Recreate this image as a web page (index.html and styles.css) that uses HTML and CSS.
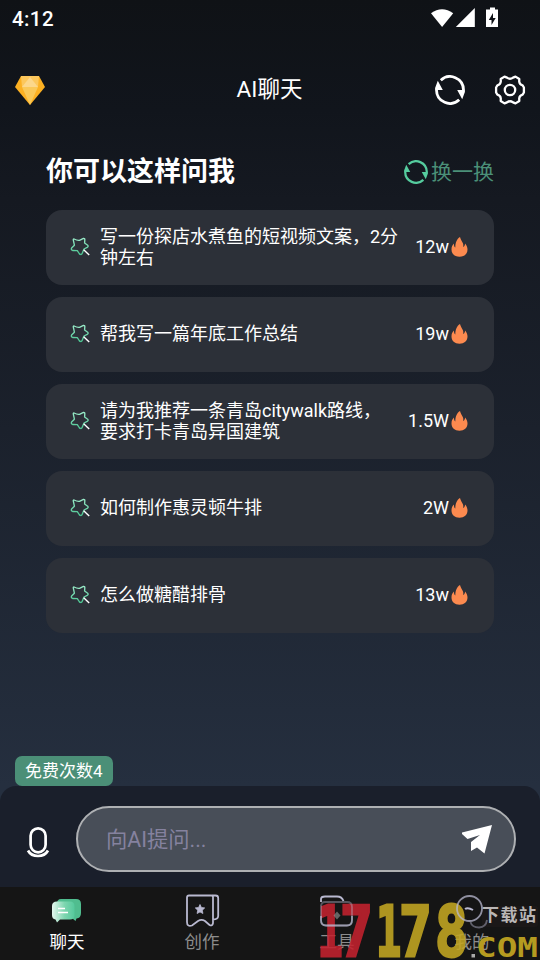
FILE: index.html
```html
<!DOCTYPE html>
<html lang="zh-CN">
<head>
<meta charset="utf-8">
<title>AI聊天</title>
<link rel="stylesheet" href="styles.css">
</head>
<body>
<svg class="defs" aria-hidden="true">
  <defs>
    <linearGradient id="mint" x1="0" y1="0" x2="0" y2="1"><stop offset="0" stop-color="#9aebc9"/><stop offset="1" stop-color="#4cc592"/></linearGradient>
    <linearGradient id="bubble" x1="0" y1="0.5" x2="1" y2="0.5"><stop offset="0" stop-color="#e5f6ee"/><stop offset=".55" stop-color="#7ed6b0"/><stop offset="1" stop-color="#55c99c"/></linearGradient>
    <symbol id="refresh" viewBox="0 0 30 30">
      <path d="M5.800 5.200A13.500 13.500 0 0 1 28.500 15M24.200 24.800A13.500 13.500 0 0 1 1.500 15" fill="none" stroke="currentColor" stroke-width="2.800"/>
      <path d="M2.800 5.800 7.800 15H0.100V13ZM27.200 24.200 22.200 15H29.900V17Z" fill="currentColor"/>
    </symbol>
    <symbol id="star" viewBox="0 0 20 20">
      <path d="M4 2Q7.500 3.800 9.500 3.300L13.500 1.400Q15 1.300 14.800 3L14.600 6L17.700 8.200Q18.800 9.500 17.200 10.400L14 12L12 16.700Q10.500 18.300 9.200 16.500L7.300 13.600L2.600 13.500Q.700 12.700 1.600 11L4.400 8.200L3.400 3.500Q3 2 4 2Z" fill="none" stroke="url(#mint)" stroke-width="1.350" stroke-linejoin="round"/>
      <path d="m13.700 12.700 5.500 5.300" stroke="#fff" stroke-width="1.400"/>
    </symbol>
    <symbol id="fire" viewBox="0 0 17 20">
      <path d="M9 0C9.600 2.500 11.200 4.500 12 6.500C12.500 8 12.300 9.300 12.200 10C13.500 9.300 14 7.800 14.100 6.400C15.800 8.400 16.500 10.300 16.500 12.500C16.500 17 13.200 19.700 8.500 19.700C3.700 19.700.5 16.800.5 12.500C.5 9.900 1.400 8.100 3 6.600C2.900 8.400 3.200 9.800 4.300 10.500C4.400 5.400 5.700 2.200 9 0Z" fill="#fc8a4f"/>
    </symbol>
  </defs>
</svg>
<div class="app">
  <div class="status">
    <span>4:12</span>
    <svg width="70" height="22" viewBox="0 0 70 22" fill="#fff">
      <path d="M1 5.200Q12 -2.800 23.200 5.200L12.100 19Z"/><path d="M44.800 0V19H25.800Z"/>
      <path fill-rule="evenodd" d="M60-.5h5v2h3v17.500H56V1.500h4ZM63 5l-4.200 7h2.700v5l4.200-7H63Z"/>
    </svg>
  </div>
  <header class="header">
    <svg width="30" height="29" viewBox="0 0 30 29">
      <path d="M6 0h18l6 11-15 18L0 11Z" fill="#fcb022"/><path d="M6 0h18l-1 11H7Z" fill="#fcc75c"/><path d="M15 1l8 10H7Z" fill="#fcd78b"/><path d="M7 11h16l-8 18Z" fill="#fac858"/>
    </svg>
    <h1>AI聊天</h1>
    <div class="actions">
      <svg width="30" height="30"><use href="#refresh"/></svg>
      <svg width="30" height="30" viewBox="0 0 30 30" fill="none" stroke="#fff" stroke-width="2.300" stroke-linejoin="round">
        <path d="M9.500 1.600 12 2.600Q15 5 18 2.600L20.500 1.600 24.300 4 24.200 6.500Q24.500 9.600 27.600 10.300L28.900 12.500V17.500L27.600 19.700Q24.500 20.400 24.200 23.500L24.300 26 20.500 28.400 18 27.400Q15 25 12 27.400L9.500 28.400 5.700 26 5.800 23.500Q5.500 20.400 2.400 19.700L1.100 17.500V12.500L2.400 10.300Q5.500 9.600 5.800 6.500L5.700 4Z"/>
        <circle cx="15" cy="15" r="5.200"/>
      </svg>
    </div>
  </header>
  <main class="main">
    <div class="title-row">
      <h2>你可以这样问我</h2>
      <div class="swap"><svg width="24" height="24"><use href="#refresh"/></svg><span>换一换</span></div>
    </div>
    <div class="card"><svg class="star"><use href="#star"/></svg><p>写一份探店水煮鱼的短视频文案，2分钟左右</p><span>12w</span><svg class="fire"><use href="#fire"/></svg></div>
    <div class="card"><svg class="star"><use href="#star"/></svg><p>帮我写一篇年底工作总结</p><span>19w</span><svg class="fire"><use href="#fire"/></svg></div>
    <div class="card"><svg class="star"><use href="#star"/></svg><p>请为我推荐一条青岛citywalk路线，<br>要求打卡青岛异国建筑</p><span>1.5W</span><svg class="fire"><use href="#fire"/></svg></div>
    <div class="card"><svg class="star"><use href="#star"/></svg><p>如何制作惠灵顿牛排</p><span>2W</span><svg class="fire"><use href="#fire"/></svg></div>
    <div class="card"><svg class="star"><use href="#star"/></svg><p>怎么做糖醋排骨</p><span>13w</span><svg class="fire"><use href="#fire"/></svg></div>
  </main>
  <div class="quota">免费次数4</div>
  <div class="composer">
    <svg width="22" height="32" viewBox="0 0 22 32" fill="none" stroke="#fff" stroke-width="2.700">
      <rect x="3.600" y="2.300" width="15" height="24" rx="7.500"/><path d="M1 24.500Q4 30 11 30T21 24.500"/>
    </svg>
    <div class="field">
      <span>向AI提问...</span>
      <svg width="30" height="29" viewBox="0 0 30 29"><path d="M30 0 22.500 28.500 15 22.500 9 26V17L18 10 5.500 14 0 9V7.500Z" fill="#fff"/></svg>
    </div>
  </div>
  <nav class="nav">
    <div class="tab active">
      <svg width="36" height="36" viewBox="0 0 36 36">
        <path d="M12 6h15q5 0 5 5v9q0 5-4.500 5.500l-1 2.500-3-2.500H12q-4 0-4-5v-10q0-4.500 4-4.500Z" fill="#50bd8f"/>
        <path d="M8 8.500h13q4.500 0 4.500 4.500v9q0 4.500-4.500 4.500H11l-3 3-1.500-3Q3 26 3 22v-9q0-4.500 5-4.500Z" fill="url(#bubble)"/>
        <path d="M9 15.500h7M9 19.500h10" stroke="#fff" stroke-width="1.600"/>
      </svg><span>聊天</span>
    </div>
    <div class="tab">
      <svg width="36" height="36" viewBox="1 0 36 36" fill="none" stroke="#b9b9d0" stroke-width="1.800">
        <path d="M5 2.500H27.500Q29 2.500 29 4V30Q28.500 33.500 25.500 32L21 28Q17.500 25.800 14 28L8 32.500Q3 34 3 29V4.500Q3 2.500 5 2.500ZM28 2.500H31.500Q34.200 2.500 34.200 5V23Q34 26.500 29 26.500" transform="translate(1 0)"/>
        <path d="m17 11.500 1.400 3 3.300.4-2.400 2.300.6 3.300-2.900-1.600-2.900 1.600.6-3.300-2.400-2.300 3.300-.4Z" fill="#b9b9d0" stroke-width=".8"/>
      </svg><span>创作</span>
    </div>
    <div class="tab"><span class="icon-space"></span><span>工具</span></div>
    <div class="tab"><span class="icon-space"></span><span>我的</span></div>
    <svg class="watermark" width="224" height="73" viewBox="0 0 224 73">
      <rect x="166" y="19" width="56" height="21" rx="3" fill="#201a1a" opacity=".6"/>
      <g class="digits">
        <g fill="#c4222f" stroke="#c4222f"><text transform="translate(1.500 69) scale(.6 1)">1</text><text transform="translate(24 69) scale(.78 1)">7</text></g>
        <g fill="#c4a722" stroke="#c4a722"><text transform="translate(60 69) scale(.6 1)">1</text><text transform="translate(83 69) scale(.78 1)">7</text><text transform="translate(119 69) scale(.78 1)">8</text></g>
      </g>
      <text class="site" x="166" y="34" textLength="54">下载站</text>
      <rect x="155.500" y="67" width="3.500" height="3.500" fill="#aaa"/>
      <text class="domain" x="160" y="70" textLength="62" lengthAdjust="spacingAndGlyphs" fill="#b59b20">COM</text>
      <g fill="none" stroke="#b9b9d0" stroke-width="1.800">
        <path d="M5 15V12Q5 9.500 9 9.500H21Q26 9.500 27.500 14"/>
        <path d="M5 18V33Q5 38.500 10 38.500H31Q36 38.500 36 33V20Q36 15 31 15H9Q5 15 5 20" opacity=".4"/>
        <path d="M5 29V33Q5 38.500 10 38.500H31Q36 38.500 36 33V29" opacity=".7"/>
        <path d="m21 24.500 3.500 4-3.500 4-3.500-4Z" fill="#999" stroke="none" opacity=".6"/>
        <circle cx="153.500" cy="21.500" r="12.500" opacity=".75"/>
        <path d="M149 22q3-2 8 1" stroke-width="2"/>
        <path d="M154.500 35Q156 40.500 163 40.500 170 40 171 33" opacity=".45"/>
      </g>
    </svg>
  </nav>
</div>
</body>
</html>
```

FILE: styles.css
```css
* { box-sizing: border-box; }
body { margin: 0; font-family: Roboto, "Noto Sans CJK SC", sans-serif; color: #fff; }
h1, h2, p { margin: 0; }
svg { display: block; flex: none; overflow: visible; }
.defs { position: absolute; width: 0; height: 0; }
.app {
  width: 540px;
  height: 960px;
  display: flex;
  flex-direction: column;
  overflow: hidden;
  background: linear-gradient(#0f1216 0, #11151c 110px, #151921 200px, #1b212c 430px, #252f3f 786px);
}
.status {
  height: 38px;
  padding: 0 40px 0 12px;
  display: flex;
  align-items: center;
  justify-content: space-between;
  font-size: 20.5px;
  font-weight: 500;
  letter-spacing: .4px;
}
.header {
  height: 104px;
  padding: 0 15px;
  display: grid;
  grid-template-columns: 1fr auto 1fr;
  align-items: center;
}
.header h1 { font-size: 22.5px; font-weight: 400; line-height: 30px; margin: -2px 1px 0 0; }
.actions { display: flex; justify-content: flex-end; gap: 30px; }
.main { flex: 1; padding: 7px 46px 0; display: flex; flex-direction: column; gap: 12px; }
.title-row { height: 49px; display: flex; align-items: center; justify-content: space-between; }
.title-row h2 { font-size: 27px; font-weight: 700; line-height: 40px; margin-top: -3px; }
.swap { display: flex; align-items: center; gap: 3px; font-size: 21px; line-height: 30px; color: #4b9078; margin-top: -4px; }
.swap svg { color: #55cc9e; }
.card {
  height: 75px;
  padding: 0 26px 2px 24px;
  border-radius: 16px;
  background: #2c3038;
  display: flex;
  align-items: center;
  font-size: 18px;
}
.card p { width: 300px; margin-left: 10px; line-height: 21px; }
.card span { flex: 1; text-align: right; }
.star { width: 20px; height: 20px; }
.fire { width: 17px; height: 20px; margin-left: 2px; }
.quota {
  align-self: flex-start;
  height: 30px;
  margin-left: 15px;
  padding: 0 10px;
  border-radius: 7px;
  background: #4b8f77;
  font-size: 17px;
  line-height: 30px;
}
.composer {
  height: 101px;
  padding: 5px 24px 0 27px;
  border-radius: 16px 16px 0 0;
  background: #1a1f2b;
  display: flex;
  align-items: center;
  gap: 27px;
}
.composer > svg { margin-top: 5px; }
.field {
  flex: 1;
  height: 66px;
  padding: 0 22px 0 28px;
  border: 2px solid #aeb0b3;
  border-radius: 33px;
  background: #484e58;
  display: flex;
  align-items: center;
  justify-content: space-between;
  font-size: 21.3px;
  color: #85829f;
}
.field span { margin-top: -3px; }
.nav {
  position: relative;
  height: 73px;
  background: #151515;
  display: grid;
  grid-template-columns: repeat(4, 1fr);
}
.tab { display: flex; flex-direction: column; align-items: center; padding: 6px 1px 0 0; font-size: 17.5px; line-height: 27px; color: #8c8c8c; }
.tab.active { color: #fff; }
.icon-space { height: 36px; }
.watermark { position: absolute; right: 0; bottom: 0; }
.digits { font: 700 70px "DejaVu Sans Mono", monospace; stroke-width: 3px; opacity: .88; }
.site { font: 700 17px "Noto Sans CJK SC", sans-serif; fill: #b9b6b6; }
.domain { font: 700 27px "DejaVu Sans Mono", monospace; }
```
